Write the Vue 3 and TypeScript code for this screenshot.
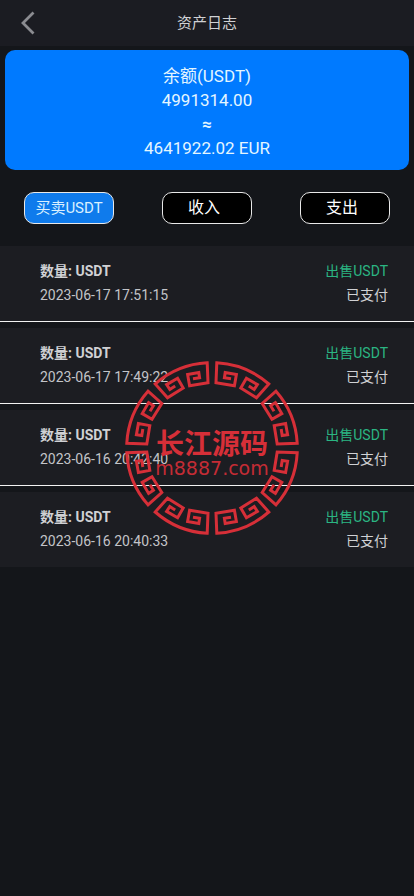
<script setup lang="ts">
import { ref } from 'vue'

interface LogEntry {
  id: number
  label: string
  time: string
  kind: string
  status: string
}

const tabs: string[] = ['买卖USDT', '收入', '支出']
const activeTab = ref<string>(tabs[0])

const entries: LogEntry[] = [
  { id: 1, label: '数量: USDT', time: '2023-06-17 17:51:15', kind: '出售USDT', status: '已支付' },
  { id: 2, label: '数量: USDT', time: '2023-06-17 17:49:22', kind: '出售USDT', status: '已支付' },
  { id: 3, label: '数量: USDT', time: '2023-06-16 20:42:40', kind: '出售USDT', status: '已支付' },
  { id: 4, label: '数量: USDT', time: '2023-06-16 20:40:33', kind: '出售USDT', status: '已支付' },
]

// One key-pattern segment of the seal; the ring repeats it eight times.
const segment =
  'M19 -69.2L12.4 -70.2L13.2 -75.6L24.4 -73.6L22.4 -62.2L4 -65.2L4.8 -85.2A85.400 85.400 0 0 1 56.800 -64L44.500 -50.200L28.800 -60L34.400 -69.800L45.400 -63.400L42.200 -58.600L36.800 -62'
const segmentTransforms: string[] = [0, 90, 180, 270].flatMap((angle) => [
  `rotate(${angle})`,
  `rotate(${angle}) scale(-1 1)`,
])
</script>

<template>
  <div class="page">
    <header class="bar">
      <button class="back" type="button" aria-label="返回">
        <svg width="16" height="26" viewBox="0 0 16 26" fill="none">
          <path d="M13.500 2.500L3 13L13.500 23.500" stroke="#8b8c91" stroke-width="2.800" />
        </svg>
      </button>
      <h1 class="title">资产日志</h1>
    </header>

    <main>
      <section class="balance">
        <p>余额(USDT)</p>
        <p>4991314.00</p>
        <p class="approx">≈</p>
        <p>4641922.02 EUR</p>
      </section>

      <nav class="tabs">
        <button
          v-for="tab in tabs"
          :key="tab"
          type="button"
          class="tab"
          :class="{ active: tab === activeTab }"
          @click="activeTab = tab"
        >
          {{ tab }}
        </button>
      </nav>

      <ul class="list">
        <li v-for="entry in entries" :key="entry.id" class="entry">
          <div class="line">
            <strong class="label">{{ entry.label }}</strong>
            <span class="kind">{{ entry.kind }}</span>
          </div>
          <div class="line">
            <time class="time">{{ entry.time }}</time>
            <span class="status">{{ entry.status }}</span>
          </div>
        </li>
      </ul>
    </main>

    <svg class="seal" width="180" height="180" viewBox="-90 -90 180 180">
      <path v-for="t in segmentTransforms" :key="t" class="key" :d="segment" :transform="t" />
      <text class="seal-name" x="0" y="6" text-anchor="middle">长江源码</text>
      <text class="seal-site" x="0" y="27" text-anchor="middle">m8887.com</text>
    </svg>
  </div>
</template>

<style>
body {
  margin: 0;
  background: #14161a;
}
</style>

<style scoped>
.page {
  position: relative;
  min-height: 100vh;
  background: #14161a;
  color: #d0d1d4;
  font-family: Roboto, 'Noto Sans CJK SC', sans-serif;
  overflow: hidden;
}

.bar {
  display: grid;
  grid-template-columns: 56px 1fr 56px;
  align-items: center;
  height: 46px;
  background: #1b1c22;
}

.back {
  display: flex;
  justify-content: center;
  padding: 0;
  border: 0;
  background: none;
  cursor: pointer;
}

.title {
  margin: 0;
  text-align: center;
  font-size: 15px;
  font-weight: 400;
  line-height: 24px;
  color: #d0d1d4;
}

.balance {
  margin: 4px 5px 0;
  padding: 14px 0 10px;
  border-radius: 10px;
  background: #007aff;
  color: #e4f6ff;
  text-align: center;
  font-size: 17px;
  line-height: 24px;
}

.balance p {
  margin: 0;
}

.balance .approx {
  font-weight: 700;
}

.tabs {
  display: flex;
  justify-content: space-between;
  padding: 22px 24px;
}

.tab {
  width: 90px;
  height: 32px;
  padding: 0 6px 0 0;
  border: 1px solid #e8e8e8;
  border-radius: 10px;
  background: #000;
  color: #fff;
  font-family: inherit;
  font-size: 16px;
  line-height: 30px;
  white-space: nowrap;
  cursor: pointer;
}

.tab.active {
  padding: 0;
  background: #0f7bec;
  color: #d9f0ff;
  font-size: 15px;
}

.list {
  display: flex;
  flex-direction: column;
  gap: 6px;
  margin: 0;
  padding: 0;
  list-style: none;
}

.entry {
  padding: 13px 26px 14px 40px;
  border-bottom: 1px solid #f2f2f2;
  background: #1c1d22;
}

.entry:last-child {
  border-bottom: 0;
}

.line {
  display: flex;
  justify-content: space-between;
  font-size: 14px;
  line-height: 24px;
}

.label {
  font-weight: 700;
}

.time {
  color: #c3c4c8;
}

.kind {
  color: #2bb582;
}

.seal {
  position: absolute;
  top: 358px;
  left: 50%;
  margin-left: -85px;
  pointer-events: none;
}

.key {
  fill: none;
  stroke: #d62f38;
  stroke-width: 3;
}

.seal-name {
  fill: #d62f38;
  font-family: 'Noto Sans CJK SC', sans-serif;
  font-size: 28px;
  font-weight: 700;
}

.seal-site {
  fill: #c42c35;
  font-family: 'DejaVu Sans', sans-serif;
  font-size: 19px;
}
</style>
